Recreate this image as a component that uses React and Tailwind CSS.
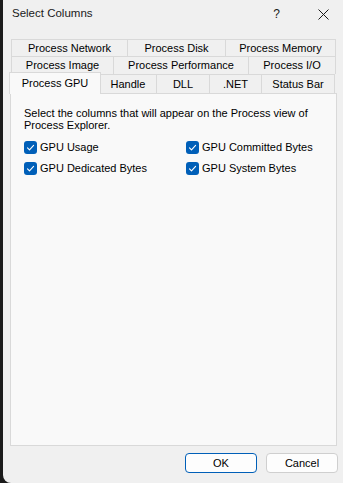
const font = { fontFamily: '"Liberation Sans", Arial, sans-serif' };

function Tab({ label, w }) {
  return (
    <div
      className="-ml-px flex h-full items-center justify-center border border-b-0 border-[#d9d9d9] bg-[#f0f0f0] text-[11px] text-black"
      style={{ width: w + 1 }}
    >
      {label}
    </div>
  );
}

function Check({ label }) {
  return (
    <div className="flex h-[13px] items-center gap-[3px]">
      <div className="flex h-[13px] w-[13px] items-center justify-center rounded-[3px] bg-[#005fb8]">
        <svg width="9" height="9" viewBox="0 0 9 9" fill="none">
          <path d="M1.5 4.8 L3.5 6.8 L7.6 2.4" stroke="white" strokeWidth="1.1" strokeLinecap="round" strokeLinejoin="round" />
        </svg>
      </div>
      <span className="text-[11px] text-black">{label}</span>
    </div>
  );
}

export default function App() {
  const row1 = [
    ["Process Network", 116],
    ["Process Disk", 98],
    ["Process Memory", 110],
  ];
  const row2 = [
    ["Process Image", 102],
    ["Process Performance", 135],
    ["Process I/O", 87],
  ];
  const row3 = [
    ["Handle", 57],
    ["DLL", 53],
    [".NET", 52],
    ["Status Bar", 73],
  ];

  return (
    <div className="flex h-[483px] w-[343px] overflow-hidden bg-[#1b1b1b]" style={font}>
      <div className="w-[3px] shrink-0 bg-[#1b1b1b]"></div>
      <div className="flex flex-1 flex-col rounded-bl-[8px] bg-[#f0f0f0]">
        {/* title bar */}
        <div className="flex h-[28px] items-center pl-[9px] pr-[14px]">
          <span className="flex-1 text-[11.5px] text-[#1a1a1a]">Select Columns</span>
          <span className="mr-[38px] text-[12px] text-[#1a1a1a]">?</span>
          <svg width="11" height="11" viewBox="0 0 11 11">
            <path d="M0.5 0.5 L10.5 10.5 M10.5 0.5 L0.5 10.5" stroke="#1a1a1a" strokeWidth="1" />
          </svg>
        </div>

        {/* tabs */}
        <div className="mt-[11px] flex flex-col">
          <div className="flex h-[18px] pl-[9px]">
            {row1.map(([l, w]) => (
              <Tab key={l} label={l} w={w} />
            ))}
          </div>
          <div className="-mt-px flex h-[18px] pl-[9px]">
            {row2.map(([l, w]) => (
              <Tab key={l} label={l} w={w} />
            ))}
          </div>
          <div className="relative flex h-[19px] pl-[97px]">
            <div className="absolute left-[6px] top-[-2px] z-10 flex h-[22px] w-[92px] items-center justify-center border border-b-0 border-[#d9d9d9] bg-[#f9f9f9] text-[11px] text-black">
              Process GPU
            </div>
            {row3.map(([l, w]) => (
              <Tab key={l} label={l} w={w} />
            ))}
          </div>
        </div>

        {/* panel */}
        <div className="ml-[7px] mr-[6px] flex h-[353px] flex-col border border-[#d9d9d9] bg-[#f9f9f9] px-[13px] pt-[13px]">
          <p className="w-[290px] text-[11px] leading-[12px] text-black">
            Select the columns that will appear on the Process view of Process Explorer.
          </p>
          <div className="mt-[10px] grid grid-cols-[162px_1fr] gap-y-[8px]">
            <Check label="GPU Usage" />
            <Check label="GPU Committed Bytes" />
            <Check label="GPU Dedicated Bytes" />
            <Check label="GPU System Bytes" />
          </div>
        </div>

        {/* buttons */}
        <div className="mt-[7px] flex justify-end gap-[9px] pr-[5px]">
          <button className="h-[20px] w-[72px] rounded-[4px] border border-[#005fb8] bg-[#fdfdfd] text-[11px] text-black">
            OK
          </button>
          <button className="h-[20px] w-[72px] rounded-[4px] border border-[#cfcfcf] bg-[#fdfdfd] text-[11px] text-black">
            Cancel
          </button>
        </div>
      </div>
    </div>
  );
}
